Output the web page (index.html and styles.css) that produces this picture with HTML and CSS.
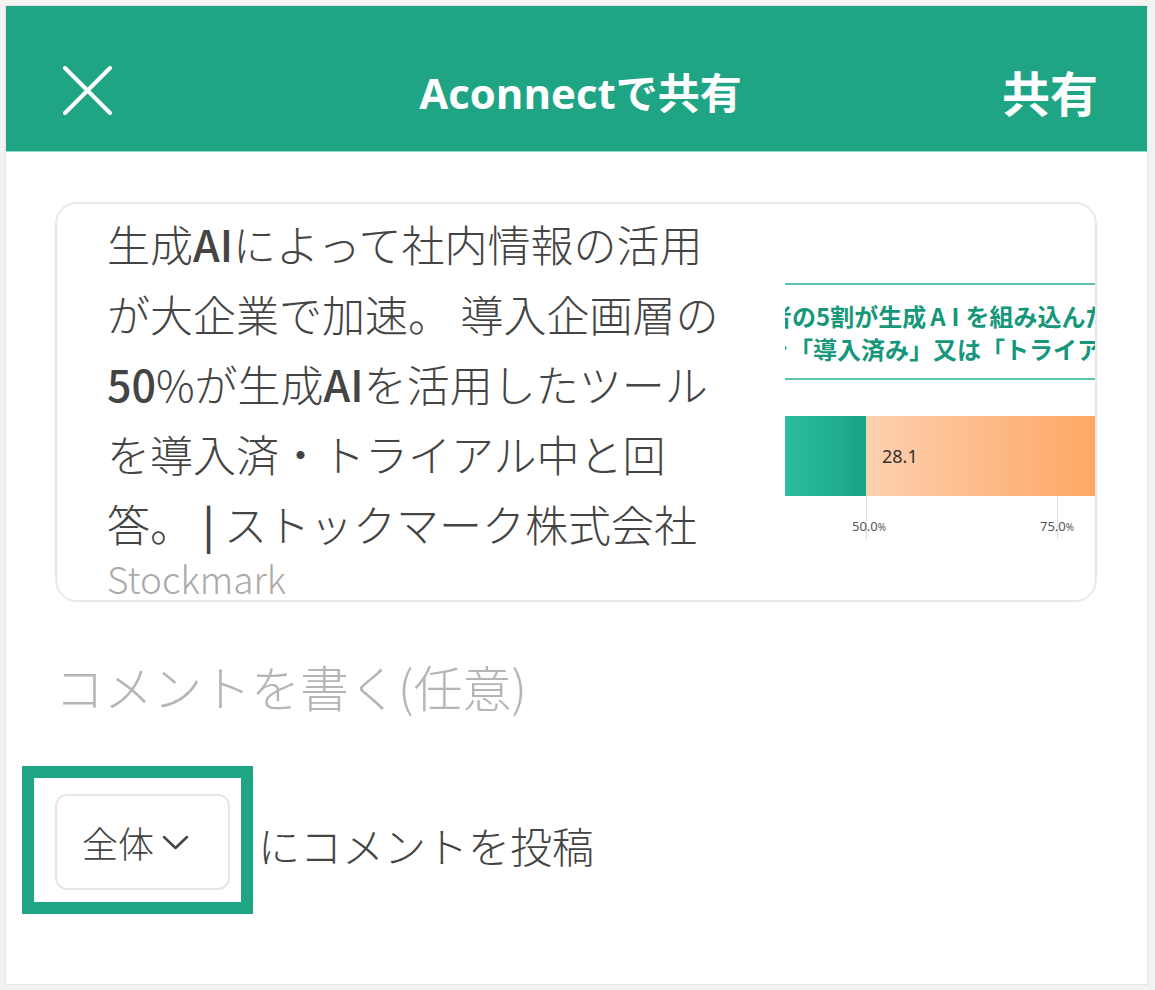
FILE: index.html
```html
<!DOCTYPE html>
<html lang="ja">
<head>
    <meta charset="UTF-8">
    <meta name="viewport" content="width=device-width, initial-scale=1.0">
    <title>Aconnectで共有</title>
    <link rel="stylesheet" href="styles.css">
</head>
<body>
    <div class="panel">
        <header class="topbar">
            <button class="close" aria-label="閉じる">
                <svg width="49" height="49" viewBox="0 0 49 49">
                    <path d="M2 2 L47 47 M47 2 L2 47" stroke="#fff" stroke-width="4" stroke-linecap="round" fill="none"/>
                </svg>
            </button>
            <h1 class="title">Aconnectで共有</h1>
            <button class="share">共有</button>
        </header>

        <div class="card">
            <div class="card-text">
                <p class="headline">生成<b>AI</b>によって社内情報の活用が大企業で加速。 導入企画層の<b>50</b>%が生成<b>AI</b>を活用したツールを導入済・トライアル中と回答。 <b>|</b> ストックマーク株式会社</p>
                <p class="source">Stockmark</p>
            </div>
            <div class="thumb">
                <div class="chart-title">
                    <div class="chart-line">者の5割が生成<span class="spaced">AI</span>を組み込んだ</div>
                    <div class="chart-line shift">を「導入済み」又は「トライアル中」</div>
                </div>
                <div class="chart">
                    <div class="grid g50"></div>
                    <div class="grid g75"></div>
                    <div class="bar">
                        <div class="seg teal"></div>
                        <div class="seg orange">28.1</div>
                    </div>
                    <div class="axis">
                        <span class="tick t50">50.0<small>%</small></span>
                        <span class="tick t75">75.0<small>%</small></span>
                    </div>
                </div>
            </div>
        </div>

        <div class="comment">コメントを書く(任意)</div>

        <div class="post-row">
            <div class="highlight">
                <button class="scope">全体
                    <svg width="27" height="15" viewBox="0 0 27 15">
                        <path d="M2 2 L13.5 13 L25 2" stroke="#444" stroke-width="2.5" stroke-linecap="round" stroke-linejoin="round" fill="none"/>
                    </svg>
                </button>
            </div>
            <span class="post-label">にコメントを投稿</span>
        </div>
    </div>
</body>
</html>
```

FILE: styles.css
```css
body {
    margin: 0;
    padding: 5px;
    background-color: #f2f2f2;
    font-family: "Noto Sans CJK JP", "Noto Sans", sans-serif;
    color: #444;
}

.panel {
    width: 1141px;
    height: 978px;
    background-color: #fff;
    border: 1px solid #e6e6e6;
    overflow: hidden;
}

.topbar {
    height: 146px;
    box-sizing: border-box;
    background-color: #1fa584;
    border-bottom: 1px solid #8fdcc6;
    display: grid;
    grid-template-columns: 1fr auto 1fr;
    align-items: center;
    padding: 24px 49px 0 57px;
}

.topbar button {
    background: none;
    border: none;
    padding: 0;
    color: #fff;
    font-family: inherit;
    cursor: pointer;
}

.close {
    width: 49px;
    height: 49px;
    display: flex;
}

.title {
    margin: 0;
    font-family: "Open Sans", "Noto Sans CJK JP", sans-serif;
    font-size: 42px;
    font-weight: 700;
    color: #fff;
}

.share {
    justify-self: end;
    font-size: 48px;
    font-weight: 700;
    line-height: 1;
}

.card {
    margin: 50px 50px 0 49px;
    height: 396px;
    border: 2px solid #e8e8e8;
    border-radius: 22px;
    display: flex;
    align-items: center;
    padding-left: 50px;
    overflow: hidden;
}

.card-text {
    width: 632px;
    flex-shrink: 0;
    padding-top: 2px;
}

.headline {
    margin: 0;
    font-size: 43px;
    font-weight: 300;
    line-height: 70px;
    color: #444;
}

.headline b {
    font-weight: 500;
}

.source {
    margin: 0;
    font-size: 37px;
    font-weight: 300;
    line-height: 40px;
    color: #aaa;
}

.thumb {
    margin-left: 46px;
    align-self: flex-start;
    margin-top: 79px;
    flex: 1;
    height: 256px;
    overflow: hidden;
    background-color: #fff;
}

.chart-title {
    border-top: 2px solid #5cc4ad;
    border-bottom: 2px solid #5cc4ad;
    height: 97px;
    padding-top: 14px;
    box-sizing: border-box;
    color: #17977a;
    font-weight: 700;
    font-size: 24px;
    line-height: 33px;
    white-space: nowrap;
}

.chart-line {
    margin-left: -17px;
}

.chart-line.shift {
    margin-left: -20px;
}

.spaced {
    letter-spacing: 6px;
    margin-left: 4px;
}

.chart {
    position: relative;
    height: 160px;
}

.grid {
    position: absolute;
    top: 22px;
    width: 1px;
    height: 107px;
    background-color: #dcdcdc;
}

.g50 { left: 81px; }
.g75 { left: 272px; }

.bar {
    position: relative;
    margin-top: 36px;
    height: 80px;
    display: flex;
}

.seg.teal {
    width: 81px;
    background: linear-gradient(to right, #2bbd9f, #1aa385);
}

.seg.orange {
    flex: 1;
    background: linear-gradient(to right, #fdd0b0, #fea764);
    font-family: "Noto Sans", sans-serif;
    font-size: 18px;
    color: #333;
    line-height: 80px;
    padding-left: 16px;
}

.axis {
    position: relative;
    height: 40px;
}

.tick {
    position: absolute;
    top: 21px;
    font-family: "Noto Sans", sans-serif;
    font-size: 13px;
    line-height: 18px;
    color: #555;
}

.tick small {
    font-size: 10px;
}

.t50 { left: 67px; }
.t75 { left: 255px; }

.comment {
    margin: 51px 0 0 49px;
    font-size: 49px;
    font-weight: 300;
    line-height: 66px;
    color: #b5b5b5;
}

.post-row {
    margin: 47px 0 0 16px;
    display: flex;
    align-items: center;
}

.highlight {
    border: 12px solid #1fa584;
    padding: 16px 11px 12px 21px;
}

.scope {
    width: 175px;
    height: 96px;
    box-sizing: border-box;
    background: #fff;
    border: 2px solid #e6e6e6;
    border-radius: 12px;
    display: flex;
    align-items: center;
    gap: 8px;
    padding: 0 0 0 25px;
    font-family: inherit;
    font-size: 36px;
    font-weight: 300;
    color: #444;
}

.post-label {
    margin-left: 5px;
    margin-top: 8px;
    font-size: 42px;
    font-weight: 300;
    color: #444;
}
```
